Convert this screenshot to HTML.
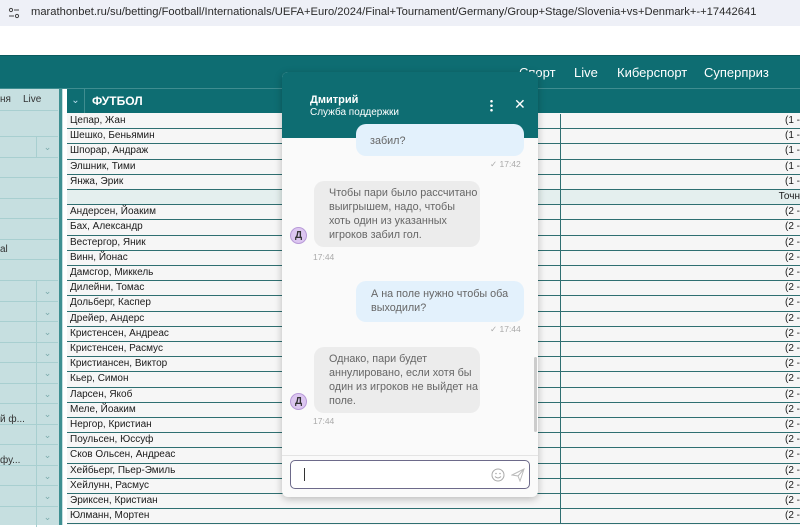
<!DOCTYPE html>
<html><head><meta charset="utf-8"><style>
*{box-sizing:border-box;margin:0;padding:0}
body{width:800px;height:525px;overflow:hidden;background:#fff;font-family:"Liberation Sans",Arial,sans-serif;position:relative}
.url{position:absolute;left:0;top:0;width:800px;height:26px;background:#eef0f7}
.url span{position:absolute;left:31px;top:6px;font-size:11.2px;color:#2a2a2a;white-space:nowrap}
.topbar{position:absolute;left:0;top:55px;width:800px;height:34px;background:#0e6d72;border-top:1px solid #0a5a5e}
.nav{position:absolute;top:65px;color:#fff;font-size:13px}
.side{position:absolute;left:0;top:89px;width:58px;height:436px;background:#c6dfe0}
.sline{position:absolute;left:0;width:58px;height:1px;background:#a8cfd0}
.chev{position:absolute;left:36px;width:22px;height:20px;border-left:1px solid #a8cfd0;color:#7aaaab;font-size:9px;text-align:center;line-height:20px}
.sbar{position:absolute;left:58px;top:89px;width:5px;height:436px;background:#c6dfe0}
.sbar i{position:absolute;left:1px;top:0;width:3px;height:436px;background:#3e8f91}
.tbl{position:absolute;left:67px;top:89px;width:733px;height:436px;background:#f6f6f6}
.thead{position:absolute;left:0;top:0;width:733px;height:24px;background:#0e6d72;color:#fff;font-weight:bold;font-size:12px}
.row{position:absolute;left:0;width:733px;height:15.2px;border-bottom:1px solid #2f6f71;font-size:10px;color:#1a1a1a;line-height:14px}
.row .n{position:absolute;left:3px;top:0}
.row .v{position:absolute;right:0;top:0}
.row .d{position:absolute;left:493px;top:0;width:1px;height:15px;background:#2f6f71}
.chat{position:absolute;left:282px;top:72px;width:256px;height:425px;background:#fafafa;border-radius:6px;overflow:hidden;box-shadow:0 2px 8px rgba(0,0,0,.25)}
.ch{position:absolute;left:0;top:0;width:256px;height:66px;background:#0e6d72;color:#fff}
.bub{position:absolute;font-size:10.8px;line-height:14px;color:#666;padding:0;white-space:nowrap}
.tm{position:absolute;font-size:8.5px;color:#aaa}
.av{position:absolute;width:17px;height:17px;border-radius:50%;background:#dcc6f0;border:1px solid #b89ad8;font-size:10px;font-weight:bold;color:#333;text-align:center;line-height:15px}
</style></head><body>
<div class="url"><svg style="position:absolute;left:8px;top:7px" width="12" height="12"><circle cx="3" cy="3" r="1.6" fill="none" stroke="#444"/><line x1="6" y1="3" x2="11" y2="3" stroke="#444"/><circle cx="9" cy="9" r="1.6" fill="none" stroke="#444"/><line x1="1" y1="9" x2="6" y2="9" stroke="#444"/></svg><span>marathonbet.ru/su/betting/Football/Internationals/UEFA+Euro/2024/Final+Tournament/Germany/Group+Stage/Slovenia+vs+Denmark+-+17442641</span></div>
<div class="topbar"></div>
<div class="nav" style="left:519px">Спорт</div><div class="nav" style="left:574px">Live</div><div class="nav" style="left:617px">Киберспорт</div><div class="nav" style="left:704px">Суперприз</div>
<div style="position:absolute;left:0;top:88px;width:800px;height:1px;background:#3f8d90"></div>
<div class="side">
<div style="position:absolute;left:0;top:5px;font-size:10px;color:#333">ня</div><div style="position:absolute;left:23px;top:5px;font-size:10px;color:#333">Live</div>
<div class="sline" style="top:21px"></div><div class="sline" style="top:47px"></div><div class="chev" style="top:48px">&#8964;</div><div class="sline" style="top:68px"></div><div class="sline" style="top:88px"></div>
<div class="sline" style="top:109px"></div><div class="sline" style="top:129px"></div><div class="sline" style="top:150px"></div><div class="sline" style="top:170px"></div><div class="sline" style="top:191px"></div>
<div style="position:absolute;left:0;top:155px;font-size:10px;color:#333">al</div>
<div style="position:absolute;left:0;top:325px;font-size:10px;color:#333">й ф...</div>
<div style="position:absolute;left:0;top:366px;font-size:10px;color:#333">фу...</div>
</div>
<div class="sbar"><i></i></div>
<div id="sb"></div>
<div class="tbl"><div class="thead"><div style="position:absolute;left:0;top:0;width:18px;height:24px;border-right:1px solid #3f8d90;font-weight:normal;font-size:10px;text-align:center;line-height:24px;color:#bde">&#8964;</div><div style="position:absolute;left:25px;top:5px">ФУТБОЛ</div></div><div id="rows"></div></div>
<div class="chat">
<div class="ch"><div style="position:absolute;left:28px;top:22px;font-weight:bold;font-size:11px">Дмитрий</div><div style="position:absolute;left:28px;top:35px;font-size:10px">Служба поддержки</div>
<div style="position:absolute;left:208px;top:27px;width:3px;height:13px;background:radial-gradient(circle,#fff 1.2px,transparent 1.4px) 0 0/3px 4.5px"></div>
<div style="position:absolute;left:232px;top:24px;font-size:14px">✕</div></div>
<div style="position:absolute;left:74px;top:52px;width:168px;height:32px;background:#e3f1fc;border-radius:10px"><div class="bub" style="left:14px;top:10px">забил?</div></div>
<div class="tm" style="left:208px;top:87px">✓ 17:42</div>
<div style="position:absolute;left:32px;top:109px;width:166px;height:66px;background:#ececec;border-radius:10px"><div class="bub" style="left:15px;top:5px">Чтобы пари было рассчитано<br>выигрышем, надо, чтобы<br>хоть один из указанных<br>игроков забил гол.</div></div>
<div class="av" style="left:8px;top:155px">Д</div>
<div class="tm" style="left:31px;top:180px">17:44</div>
<div style="position:absolute;left:74px;top:209px;width:168px;height:41px;background:#e3f1fc;border-radius:10px"><div class="bub" style="left:15px;top:6px">А на поле нужно чтобы оба<br>выходили?</div></div>
<div class="tm" style="left:208px;top:252px">✓ 17:44</div>
<div style="position:absolute;left:32px;top:275px;width:166px;height:66px;background:#ececec;border-radius:10px"><div class="bub" style="left:15px;top:5px">Однако, пари будет<br>аннулировано, если хотя бы<br>один из игроков не выйдет на<br>поле.</div></div>
<div class="av" style="left:8px;top:321px">Д</div>
<div class="tm" style="left:31px;top:344px">17:44</div>
<div style="position:absolute;left:252px;top:285px;width:3px;height:75px;background:#ccc;border-radius:2px"></div>
<div style="position:absolute;left:0;top:383px;width:256px;height:1px;background:#e4e4e4"></div>
<div style="position:absolute;left:8px;top:388px;width:240px;height:29px;border:1px solid #6d6a8a;border-radius:5px;background:#fff"><div style="position:absolute;left:13px;top:7px;width:1px;height:13px;background:#333"></div>
<svg style="position:absolute;left:200px;top:7px" width="14" height="14"><circle cx="7" cy="7" r="6" fill="none" stroke="#aaa"/><circle cx="5" cy="5.5" r=".8" fill="#aaa"/><circle cx="9" cy="5.5" r=".8" fill="#aaa"/><path d="M4 8.5Q7 11.5 10 8.5" fill="none" stroke="#aaa"/></svg>
<svg style="position:absolute;left:220px;top:7px" width="14" height="14"><path d="M1 7L13 1L9 13L7 8Z M7 8L13 1" fill="none" stroke="#bbb"/></svg></div>
</div>
<script>
var names=["Цепар, Жан","Шешко, Беньямин","Шпорар, Андраж","Элшник, Тими","Янжа, Эрик","","Андерсен, Йоаким","Бах, Александр","Вестергор, Яник","Винн, Йонас","Дамсгор, Миккель","Дилейни, Томас","Дольберг, Каспер","Дрейер, Андерс","Кристенсен, Андреас","Кристенсен, Расмус","Кристиансен, Виктор","Кьер, Симон","Ларсен, Якоб","Меле, Йоаким","Нергор, Кристиан","Поульсен, Юссуф","Сков Ольсен, Андреас","Хейбьерг, Пьер-Эмиль","Хейлунн, Расмус","Эриксен, Кристиан","Юлманн, Мортен"];
var h="";names.forEach(function(n,i){var t=25+i*15.2;var v=i<5?"(1 -":(i==5?"Точн":"(2 -");h+='<div class="row" style="top:'+t+'px;'+(i==5?'background:#e4efee':'')+'"><span class="n">'+n+'</span><span class="d"></span><span class="v">'+v+'</span></div>';});
document.getElementById("rows").innerHTML=h;
var s="";for(var i=0;i<12;i++){var t=280+i*20.5;s+='<div class="sline" style="top:'+(t)+'px;position:absolute"></div><div class="chev" style="top:'+(t+1)+'px;position:absolute">&#8964;</div>';}
document.getElementById("sb").innerHTML=s;
</script>
</body></html>
